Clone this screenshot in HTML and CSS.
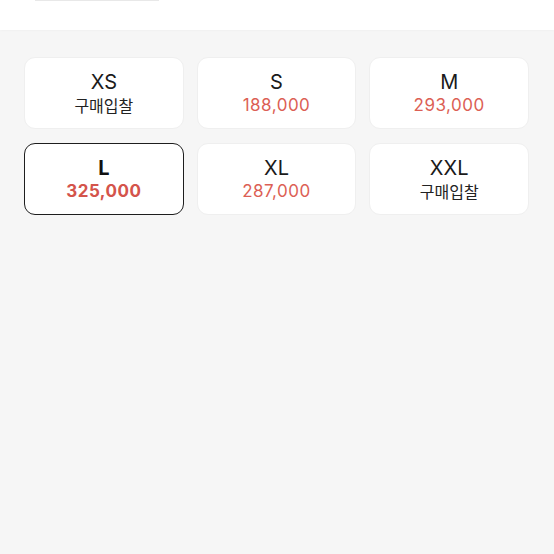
FILE: index.html
```html
<!DOCTYPE html>
<html lang="ko">
<head>
<meta charset="utf-8">
<link rel="stylesheet" href="styles.css">
</head>
<body>
<div class="top"><div class="top-line"></div></div>
<div class="content">
  <div class="grid">
    <div class="card"><div class="size">XS</div><div class="sub">구매입찰</div></div>
    <div class="card"><div class="size">S</div><div class="price">188,000</div></div>
    <div class="card"><div class="size">M</div><div class="price">293,000</div></div>
    <div class="card selected"><div class="size">L</div><div class="price">325,000</div></div>
    <div class="card"><div class="size">XL</div><div class="price">287,000</div></div>
    <div class="card"><div class="size">XXL</div><div class="sub">구매입찰</div></div>
  </div>
</div>
</body>
</html>
```
FILE: styles.css
```css
html, body {
  margin: 0;
  padding: 0;
  height: 100%;
}
body {
  background: #f6f6f6;
  font-family: Inter, "Noto Sans", "Noto Sans CJK KR", sans-serif;
  color: #222;
}
.top {
  height: 30px;
  background: #fff;
  box-shadow: 0 1px 2px rgba(0,0,0,0.025);
}
.top-line {
  margin-left: 35px;
  width: 124px;
  height: 1px;
  background: #e8e8e8;
}
.content {
  padding: 27px 25px 0 24px;
}
.grid {
  display: grid;
  grid-template-columns: repeat(3, 1fr);
  column-gap: 13px;
  row-gap: 14px;
}
.card {
  height: 72px;
  box-sizing: border-box;
  background: #fff;
  border: 1px solid #efefef;
  border-radius: 11px;
  display: flex;
  flex-direction: column;
  align-items: center;
  justify-content: center;
}
.card.selected {
  border: 1.5px solid #1e1e1e;
}
.size {
  font-size: 20px;
  line-height: 24px;
  color: #1a1a1a;
}
.selected .size {
  font-weight: 700;
  color: #111;
}
.sub {
  font-family: "Noto Sans CJK KR", sans-serif;
  font-size: 16px;
  line-height: 22px;
  color: #222;
}
.price {
  font-size: 17px;
  line-height: 22px;
  color: #dc5f55;
  letter-spacing: 0.5px;
}
.selected .price {
  font-weight: 700;
  color: #d4544b;
}
```
